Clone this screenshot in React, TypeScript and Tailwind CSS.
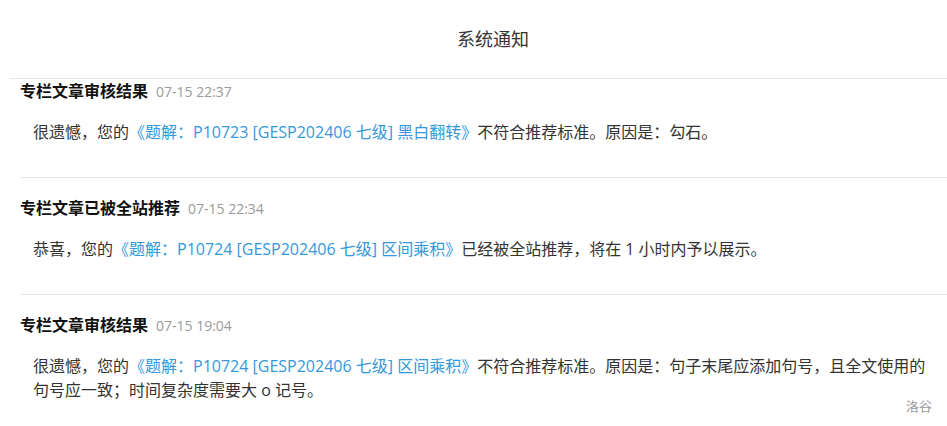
import React from "react";

type Notice = {
  title: string;
  time: string;
  before: string;
  link: string;
  after: string;
};

const notices: Notice[] = [
  {
    title: "专栏文章审核结果",
    time: "07-15 22:37",
    before: "很遗憾，您的",
    link: "《题解：P10723 [GESP202406 七级] 黑白翻转》",
    after: "不符合推荐标准。原因是：勾石。",
  },
  {
    title: "专栏文章已被全站推荐",
    time: "07-15 22:34",
    before: "恭喜，您的",
    link: "《题解：P10724 [GESP202406 七级] 区间乘积》",
    after: "已经被全站推荐，将在 1 小时内予以展示。",
  },
  {
    title: "专栏文章审核结果",
    time: "07-15 19:04",
    before: "很遗憾，您的",
    link: "《题解：P10724 [GESP202406 七级] 区间乘积》",
    after:
      "不符合推荐标准。原因是：句子末尾应添加句号，且全文使用的句号应一致；时间复杂度需要大 o 记号。",
  },
];

export default function App() {
  return (
    <div className="relative h-[426px] w-[947px] overflow-hidden bg-white font-['Open_Sans','Noto_Sans_CJK_SC',sans-serif] text-[#333]">
      <div className="ml-[10px] flex h-[79px] items-center justify-center border-b border-[#e6e6e6] pl-[29px]">
        <span className="text-[18px] leading-[24px] text-[#333]">系统通知</span>
      </div>
      <div className="ml-[20px]">
        {notices.map((n, idx) => (
          <div
            key={idx}
            className={idx === 0 ? "pb-[33px]" : "border-t border-[#e6e6e6] pt-[18px] pb-[33px]"}
          >
            <div className="flex h-[24px] items-center gap-[8px]">
              <span className="text-[16px] font-bold text-[#111]">{n.title}</span>
              <span className="text-[14px] text-[#999]">{n.time}</span>
            </div>
            <div className="mt-[17px] pl-[13px] pr-[14px] text-[16px] leading-[24px] text-[#333]">
              {n.before}
              <a className="text-[#3498db]">{n.link}</a>
              {n.after}
            </div>
          </div>
        ))}
      </div>
      <div className="absolute right-[15px] bottom-[10px] text-[13px] text-[#999]">洛谷</div>
    </div>
  );
}
